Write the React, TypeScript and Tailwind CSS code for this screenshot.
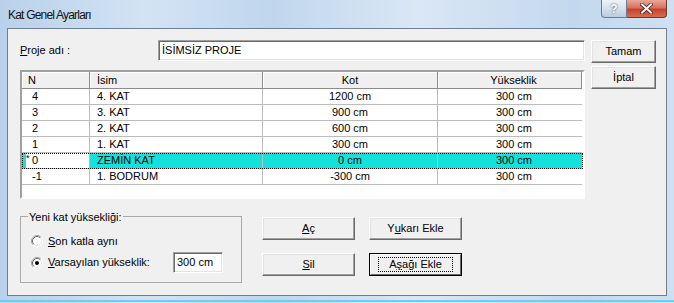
import type { ReactNode } from "react";

const rows = [
  { n: "4", name: "4. KAT", kot: "1200 cm", h: "300 cm" },
  { n: "3", name: "3. KAT", kot: "900 cm", h: "300 cm" },
  { n: "2", name: "2. KAT", kot: "600 cm", h: "300 cm" },
  { n: "1", name: "1. KAT", kot: "300 cm", h: "300 cm" },
  { n: "0", name: "ZEMİN KAT", kot: "0 cm", h: "300 cm", selected: true },
  { n: "-1", name: "1. BODRUM", kot: "-300 cm", h: "300 cm" },
];

function Btn({ children, isDefault, className = "" }: { children: ReactNode; isDefault?: boolean; className?: string }) {
  if (isDefault) {
    return (
      <div className={`h-[23px] border border-black ${className}`}>
        <div className="h-full flex items-center justify-center bg-[#f0f0f0] border border-t-white border-l-white border-r-[#696969] border-b-[#696969]">
          <div className="px-[10px] h-[15px] flex items-center border border-dotted border-black text-[11px]">{children}</div>
        </div>
      </div>
    );
  }
  return (
    <div
      className={`h-[23px] flex items-center justify-center bg-[#f0f0f0] border border-t-white border-l-white border-r-[#696969] border-b-[#696969] shadow-[inset_-1px_-1px_0_#a0a0a0,inset_1px_1px_0_#e3e3e3] text-[11px] ${className}`}
    >
      {children}
    </div>
  );
}

function Radio({ checked }: { checked?: boolean }) {
  return (
    <svg width="12" height="12" viewBox="0 0 12 12" className="shrink-0">
      <circle cx="6" cy="6" r="4.5" fill="#ffffff" />
      <path d="M9.89 2.11 A5.5 5.5 0 0 0 2.11 9.89" fill="none" stroke="#a0a0a0" />
      <path d="M2.11 9.89 A5.5 5.5 0 0 0 9.89 2.11" fill="none" stroke="#ffffff" />
      <path d="M9.18 2.82 A4.5 4.5 0 0 0 2.82 9.18" fill="none" stroke="#696969" />
      <path d="M2.82 9.18 A4.5 4.5 0 0 0 9.18 2.82" fill="none" stroke="#e3e3e3" />
      {checked && <circle cx="6" cy="6" r="2" fill="#000000" />}
    </svg>
  );
}

const sunken =
  "border border-t-[#a0a0a0] border-l-[#a0a0a0] border-r-white border-b-white shadow-[inset_1px_1px_0_#696969,inset_-1px_-1px_0_#e3e3e3] bg-white";

export default function App() {
  return (
    <div className="w-[674px] h-[303px] overflow-hidden flex flex-col bg-[linear-gradient(90deg,#b9d1ea_0%,#d3e3f4_22%,#c0d6ed_40%,#dae7f5_62%,#c3d8ee_85%,#cfe0f2_100%)] font-['Liberation_Sans',Arial,sans-serif] text-black">
      {/* title bar */}
      <div className="h-[28px] shrink-0 flex items-start pl-[8px] pr-[7px]">
        <div className="mt-[8px] text-[12px] leading-[14px] tracking-[-0.8px] text-[#111]">Kat Genel Ayarları</div>
        <div className="ml-auto flex">
          <div className="w-[26px] h-[18px] flex items-center justify-center border border-t-0 border-[#6b7d92] rounded-bl-[4px] bg-[linear-gradient(180deg,#eef3f9_0%,#d6e1ee_50%,#bccbdc_100%)] text-[12px] font-bold text-white [text-shadow:0_0_2px_#2a3a4e]">
            ?
          </div>
          <div className="w-[40px] h-[18px] flex items-center justify-center border border-t-0 border-l-0 border-[#6b3a32] rounded-br-[4px] bg-[linear-gradient(180deg,#e9a899_0%,#d7725f_45%,#c4432b_55%,#d66c4f_100%)]">
            <svg width="13" height="11" viewBox="0 0 13 11">
              <path d="M2 1.5 L11 9.5 M11 1.5 L2 9.5" stroke="#4a1c14" strokeWidth="3.6" strokeLinecap="square" />
              <path d="M2 1.5 L11 9.5 M11 1.5 L2 9.5" stroke="#ffffff" strokeWidth="2" strokeLinecap="square" />
            </svg>
          </div>
        </div>
      </div>

      {/* client area */}
      <div className="mx-[7px] h-[268px] shrink-0 border border-[#6f7e8e] bg-[#f0f0f0] flex pl-[12px] pt-[11px] text-[11px]">
        <div className="w-[565px] flex flex-col">
          <div className="h-[21px] flex items-center">
            <div className="w-[138px]">
              <span className="underline">P</span>roje adı :
            </div>
            <div className={`flex-1 h-[21px] flex items-center pl-[3px] ${sunken}`}>İSİMSİZ PROJE</div>
          </div>

          {/* table */}
          <div className={`mt-[9px] h-[129px] overflow-hidden ${sunken} border-2 border-t-[#a0a0a0] border-l-[#a0a0a0] border-r-[#f0f0f0] border-b-[#f0f0f0] shadow-none`}>
            <div className="grid grid-cols-[68px_173px_175px_144px] leading-[15px]">
              <div className="h-[17px] pl-[6px] flex items-center bg-[#f0f0f0] border-r border-b border-[#8c8c8c] shadow-[inset_1px_1px_0_#ffffff]">N</div>
              <div className="h-[17px] pl-[7px] flex items-center bg-[#f0f0f0] border-r border-b border-[#8c8c8c] shadow-[inset_1px_1px_0_#ffffff]">İsim</div>
              <div className="h-[17px] flex items-center justify-center bg-[#f0f0f0] border-r border-b border-[#8c8c8c] shadow-[inset_1px_1px_0_#ffffff]">Kot</div>
              <div className="h-[17px] pl-[8px] flex items-center justify-center bg-[#f0f0f0] border-r border-b border-[#8c8c8c] shadow-[inset_1px_1px_0_#ffffff]">Yükseklik</div>
            </div>
            {rows.map((r) => (
              <div
                key={r.n}
                className={`grid grid-cols-[68px_173px_175px_144px] leading-[15px] ${r.selected ? "outline outline-1 outline-dotted outline-black -outline-offset-1" : ""}`}
              >
                <div className="h-[16px] flex items-center border-r border-b border-[#bcbcbc] bg-white">
                  <div className={`w-[4px] h-full ${r.selected ? "bg-[#14e1dc]" : ""}`} />
                  <div className="w-[6px] self-start text-[9px] leading-[9px] mt-[1px]">{r.selected ? "*" : ""}</div>
                  <div>{r.n}</div>
                </div>
                <div className={`h-[16px] pl-[7px] flex items-center border-r border-b border-[#bcbcbc] ${r.selected ? "bg-[#14e1dc]" : ""}`}>{r.name}</div>
                <div className={`h-[16px] flex items-center justify-center border-r border-b border-[#bcbcbc] ${r.selected ? "bg-[#14e1dc]" : ""}`}>{r.kot}</div>
                <div className={`h-[16px] pl-[8px] flex items-center justify-center border-b border-[#bcbcbc] ${r.selected ? "bg-[#14e1dc]" : ""}`}>{r.h}</div>
              </div>
            ))}
          </div>

          {/* bottom section */}
          <div className="mt-[17px] flex items-start">
            <div className="relative w-[222px] h-[67px] border border-[#a9a9a9] pt-[16px] pl-[10px]">
              <span className="absolute -top-[8px] left-[7px] px-[1px] bg-[#f0f0f0]">Yeni kat yüksekliği:</span>
              <div className="h-[16px] flex items-center">
                <Radio />
                <span className="ml-[5px]">
                  <span className="underline">S</span>on katla aynı
                </span>
              </div>
              <div className="mt-[3px] h-[21px] flex items-center">
                <Radio checked />
                <span className="ml-[5px] w-[125px]">
                  <span className="underline">V</span>arsayılan yükseklik:
                </span>
                <div className={`w-[50px] h-[21px] flex items-center pl-[3px] ${sunken}`}>300 cm</div>
              </div>
            </div>
            <div className="ml-[20px] mt-[1px] w-[93px] flex flex-col gap-[13px]">
              <Btn>
                <span className="underline">A</span>ç
              </Btn>
              <Btn>
                <span className="underline">S</span>il
              </Btn>
            </div>
            <div className="ml-[14px] mt-[1px] w-[93px] flex flex-col gap-[13px]">
              <Btn>
                Y<span className="underline">u</span>karı Ekle
              </Btn>
              <Btn isDefault>
                A<span className="underline">ş</span>ağı Ekle
              </Btn>
            </div>
          </div>
        </div>

        <div className="ml-[6px] w-[65px] flex flex-col gap-[3px]">
          <Btn>Tamam</Btn>
          <Btn>İptal</Btn>
        </div>
      </div>

      <div className="h-[4px] shrink-0" />
      <div className="h-[2px] shrink-0 bg-[#62d4ef]" />
    </div>
  );
}
